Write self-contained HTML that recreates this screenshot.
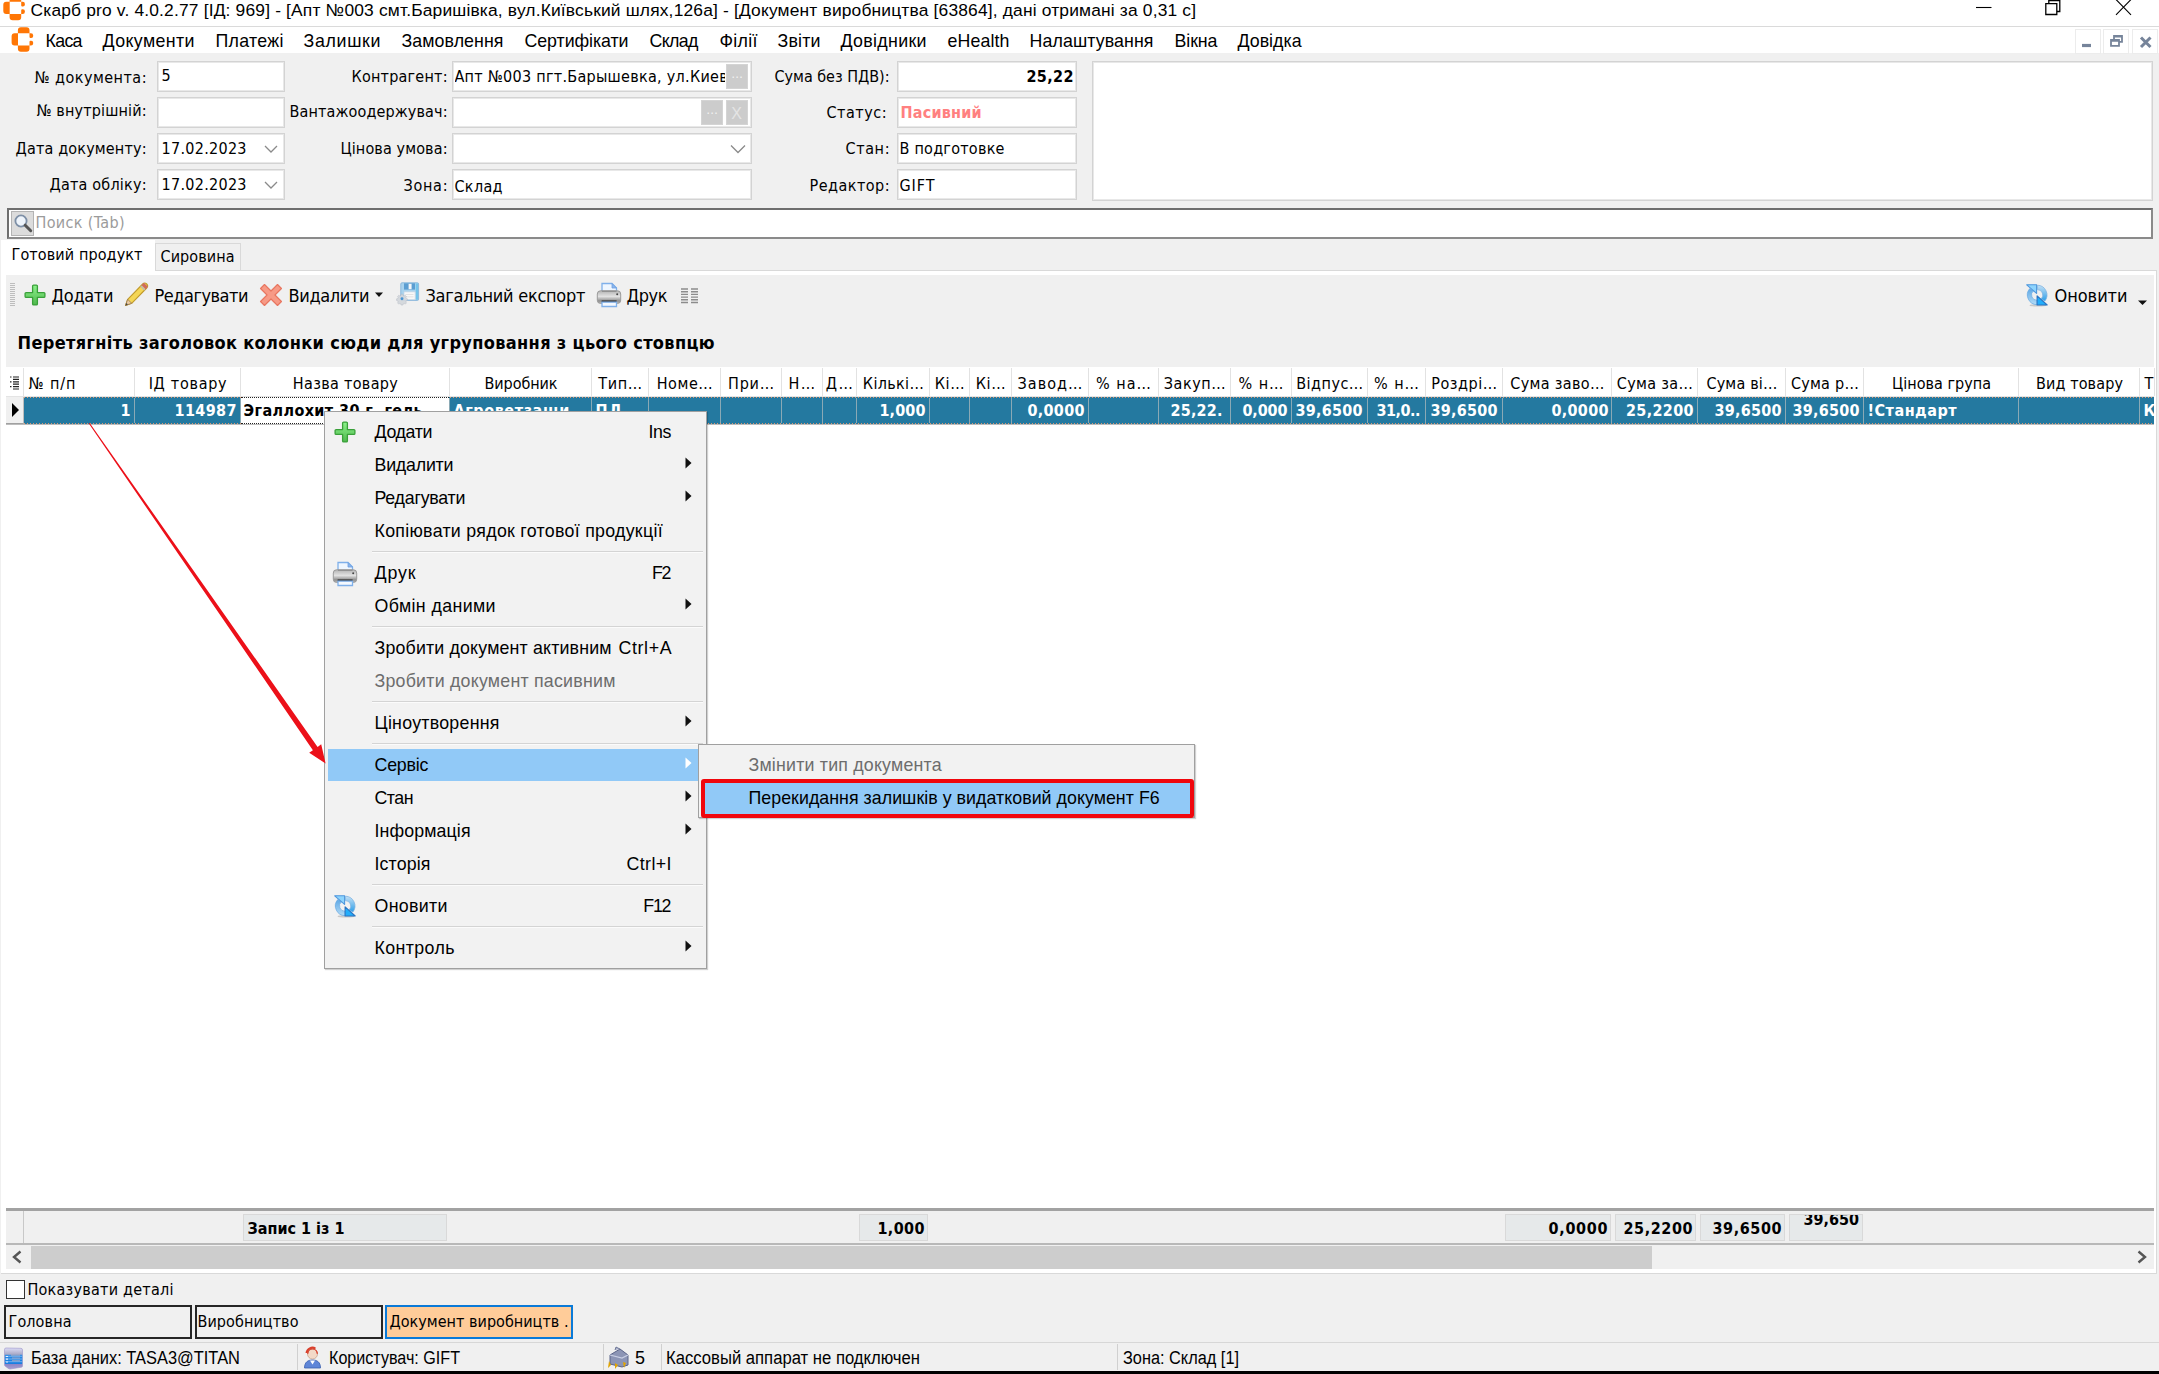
<!DOCTYPE html>
<html lang="uk">
<head>
<meta charset="utf-8">
<title>Скарб pro</title>
<style>
html,body{margin:0;padding:0;background:#f0f0f0;}
body{width:2159px;height:1374px;overflow:hidden;font-family:"DejaVu Sans Condensed","DejaVu Sans","Liberation Sans",sans-serif;font-stretch:condensed;}
#app{position:relative;width:2159px;height:1374px;overflow:hidden;background:#f0f0f0;}
#app div,#app span.t,#app svg{position:absolute;box-sizing:border-box;}
.t{white-space:nowrap;display:block;}
.w{background:#fff;}
.inp{background:#fff;border:1px solid #d3d3d3;box-shadow:inset 0 0 0 1px #e8e8e8;}
.btn{background:#cccccc;border:1px solid #d4d4d4;}
.sep{background:#d7d7d7;}
</style>
</head>
<body>
<div id="app">
<svg style="left:0;top:0" width="0" height="0"><defs><linearGradient id="gPl" x1="0" y1="0" x2="0" y2="1"><stop offset="0" stop-color="#8df28b"/><stop offset="1" stop-color="#4fb84d"/></linearGradient><linearGradient id="gPr" x1="0" y1="0" x2="0" y2="1"><stop offset="0" stop-color="#b4b4b4"/><stop offset=".45" stop-color="#e2e2e2"/><stop offset=".8" stop-color="#8e8e8e"/><stop offset="1" stop-color="#bdbdbd"/></linearGradient><linearGradient id="gRa" x1="0" y1="0" x2="0" y2="1"><stop offset="0" stop-color="#c4e0f5"/><stop offset="1" stop-color="#2f9fe8"/></linearGradient><linearGradient id="gRb" x1="0" y1="0" x2="0" y2="1"><stop offset="0" stop-color="#5fa9e6"/><stop offset="1" stop-color="#b4dcf6"/></linearGradient></defs></svg>
<div class="w" style="left:0px;top:0px;width:2159px;height:53px;"></div>
<div class="" style="left:0px;top:26px;width:2159px;height:1px;background:#dadada;"></div>
<svg style="left:0;top:0" width="40" height="56" viewBox="0 0 40 56"><path transform="translate(-8.3 -31.45)" d="M17.900 33.300V30.300Q17.900 27.300 20.900 27.300H26.500Q29.500 27.300 29.500 30.300V33.300Z M18 33.300H14.600Q11.600 33.300 11.600 36.300V42.400Q11.600 45.400 14.600 45.400H18Z M17.900 45.400H29.500V48.700Q29.500 51.700 26.500 51.700H20.900Q17.900 51.700 17.900 48.700Z M29.500 33.300H31Q33.200 33.300 33.200 35.500V36Q33.200 38 31.200 38H30.500Q29.500 38 29.500 37Z M29.500 45.400H31Q33.200 45.400 33.200 43.200V42.800Q33.200 40.800 31.200 40.800H30.500Q29.500 40.800 29.500 41.800Z" fill="#ff7605"/></svg>
<span id="t1" class="t" style="top:-1px;font-size:17.4px;line-height:22px;height:22px;color:#000;font-family:'Liberation Sans',sans-serif;letter-spacing:0.17px;left:30.5px;">Скарб pro v. 4.0.2.77 [ІД: 969] - [Апт №003 смт.Баришівка, вул.Київський шлях,126а] - [Документ виробництва [63864], дані отримані за 0,31 с]</span>
<svg style="left:1960px;top:0" width="199" height="26" viewBox="0 0 199 26"><g fill="none" stroke="#000" stroke-width="1.1"><path d="M16 7.500h15.500"/><path d="M85.800 3.700h11v10.800h-11z M88.800 3.700v-3.200h11v11h-3" stroke-width="1.300"/><path d="M156 -0.500l15 15.300M171 -0.500l-15 15.300"/></g></svg>
<svg style="left:0;top:0" width="40" height="56" viewBox="0 0 40 56"><path transform="translate(0 0)" d="M17.900 33.300V30.300Q17.900 27.300 20.900 27.300H26.500Q29.500 27.300 29.500 30.300V33.300Z M18 33.300H14.600Q11.600 33.300 11.600 36.300V42.400Q11.600 45.400 14.600 45.400H18Z M17.900 45.400H29.500V48.700Q29.500 51.700 26.500 51.700H20.900Q17.900 51.700 17.900 48.700Z M29.500 33.300H31Q33.200 33.300 33.200 35.500V36Q33.200 38 31.200 38H30.500Q29.500 38 29.500 37Z M29.500 45.400H31Q33.200 45.400 33.200 43.200V42.800Q33.200 40.800 31.200 40.800H30.500Q29.500 40.800 29.500 41.800Z" fill="#ff7605"/></svg>
<span id="t2" class="t" style="top:29px;font-size:17.8px;line-height:24px;height:24px;color:#000;font-family:'Liberation Sans',sans-serif;letter-spacing:-0.68px;left:45.5px;">Каса</span>
<span id="t3" class="t" style="top:29px;font-size:17.8px;line-height:24px;height:24px;color:#000;font-family:'Liberation Sans',sans-serif;letter-spacing:0.4px;left:102.5px;">Документи</span>
<span id="t4" class="t" style="top:29px;font-size:17.8px;line-height:24px;height:24px;color:#000;font-family:'Liberation Sans',sans-serif;letter-spacing:0.31px;left:215.5px;">Платежі</span>
<span id="t5" class="t" style="top:29px;font-size:17.8px;line-height:24px;height:24px;color:#000;font-family:'Liberation Sans',sans-serif;letter-spacing:0.68px;left:303.5px;">Залишки</span>
<span id="t6" class="t" style="top:29px;font-size:17.8px;line-height:24px;height:24px;color:#000;font-family:'Liberation Sans',sans-serif;letter-spacing:0.07px;left:401.5px;">Замовлення</span>
<span id="t7" class="t" style="top:29px;font-size:17.8px;line-height:24px;height:24px;color:#000;font-family:'Liberation Sans',sans-serif;letter-spacing:-0.06px;left:524.5px;">Сертифікати</span>
<span id="t8" class="t" style="top:29px;font-size:17.8px;line-height:24px;height:24px;color:#000;font-family:'Liberation Sans',sans-serif;letter-spacing:-0.62px;left:649.5px;">Склад</span>
<span id="t9" class="t" style="top:29px;font-size:17.8px;line-height:24px;height:24px;color:#000;font-family:'Liberation Sans',sans-serif;letter-spacing:0.31px;left:719.5px;">Філії</span>
<span id="t10" class="t" style="top:29px;font-size:17.8px;line-height:24px;height:24px;color:#000;font-family:'Liberation Sans',sans-serif;letter-spacing:0.2px;left:777.5px;">Звіти</span>
<span id="t11" class="t" style="top:29px;font-size:17.8px;line-height:24px;height:24px;color:#000;font-family:'Liberation Sans',sans-serif;letter-spacing:0.33px;left:840.5px;">Довідники</span>
<span id="t12" class="t" style="top:29px;font-size:17.8px;line-height:24px;height:24px;color:#000;font-family:'Liberation Sans',sans-serif;letter-spacing:0.12px;left:947.5px;">eHealth</span>
<span id="t13" class="t" style="top:29px;font-size:17.8px;line-height:24px;height:24px;color:#000;font-family:'Liberation Sans',sans-serif;letter-spacing:0.1px;left:1029.5px;">Налаштування</span>
<span id="t14" class="t" style="top:29px;font-size:17.8px;line-height:24px;height:24px;color:#000;font-family:'Liberation Sans',sans-serif;letter-spacing:-0.08px;left:1174.5px;">Вікна</span>
<span id="t15" class="t" style="top:29px;font-size:17.8px;line-height:24px;height:24px;color:#000;font-family:'Liberation Sans',sans-serif;letter-spacing:0.01px;left:1237.5px;">Довідка</span>
<div class="" style="left:2075px;top:29px;width:26px;height:25px;background:#fff;border:1px solid #ececec;"></div>
<div class="" style="left:2103px;top:29px;width:26px;height:25px;background:#fff;border:1px solid #ececec;"></div>
<div class="" style="left:2132px;top:29px;width:26px;height:25px;background:#fff;border:1px solid #ececec;"></div>
<svg style="left:2075px;top:29px" width="84" height="25" viewBox="0 0 84 25"><g fill="none" stroke="#76849a"><path d="M7 16.500h9" stroke-width="3.200"/><path d="M66 8.500l9.500 9.500M75.500 8.500l-9.500 9.500" stroke-width="3"/><path d="M36 10.800h8v6h-8z M39 10v-3.200h8v6h-3" stroke-width="1.800"/><path d="M36 11.500h8M39 7.400h8" stroke-width="2.400"/></g></svg>
<span id="t16" class="t" style="top:68px;font-size:16px;line-height:20px;height:20px;color:#000;letter-spacing:0.48px;right:2012.02px;">№ документа:</span>
<div class="inp" style="left:157px;top:61px;width:128px;height:31px;"></div>
<span id="t17" class="t" style="top:101px;font-size:16px;line-height:20px;height:20px;color:#000;letter-spacing:0.14px;right:2012.36px;">№ внутрішній:</span>
<div class="inp" style="left:157px;top:97px;width:128px;height:31px;"></div>
<span id="t18" class="t" style="top:139px;font-size:16px;line-height:20px;height:20px;color:#000;letter-spacing:0.16px;right:2012.34px;">Дата документу:</span>
<div class="inp" style="left:157px;top:133px;width:128px;height:31px;"></div>
<span id="t19" class="t" style="top:175px;font-size:16px;line-height:20px;height:20px;color:#000;letter-spacing:0.2px;right:2012.30px;">Дата обліку:</span>
<div class="inp" style="left:157px;top:169px;width:128px;height:31px;"></div>
<span id="t20" class="t" style="top:66px;font-size:16px;line-height:20px;height:20px;color:#000;left:161.5px;">5</span>
<span id="t21" class="t" style="top:139px;font-size:16px;line-height:20px;height:20px;color:#000;letter-spacing:0.29px;left:161.5px;">17.02.2023</span>
<svg style="left:263px;top:143px" width="16" height="12" viewBox="0 0 16 12"><path d="M2 3l6 6l6-6" fill="none" stroke="#8a8a8a" stroke-width="1.3"/></svg>
<span id="t22" class="t" style="top:175px;font-size:16px;line-height:20px;height:20px;color:#000;letter-spacing:0.29px;left:161.5px;">17.02.2023</span>
<svg style="left:263px;top:179px" width="16" height="12" viewBox="0 0 16 12"><path d="M2 3l6 6l6-6" fill="none" stroke="#8a8a8a" stroke-width="1.3"/></svg>
<span id="t23" class="t" style="top:67px;font-size:16px;line-height:20px;height:20px;color:#000;letter-spacing:0.21px;right:1711.29px;">Контрагент:</span>
<div class="inp" style="left:452px;top:61px;width:300px;height:31px;"></div>
<span id="t24" class="t" style="top:102px;font-size:16px;line-height:20px;height:20px;color:#000;letter-spacing:0.12px;right:1711.38px;">Вантажоодержувач:</span>
<div class="inp" style="left:452px;top:97px;width:300px;height:31px;"></div>
<span id="t25" class="t" style="top:139px;font-size:16px;line-height:20px;height:20px;color:#000;letter-spacing:0.12px;right:1711.38px;">Цінова умова:</span>
<div class="inp" style="left:452px;top:133px;width:300px;height:31px;"></div>
<span id="t26" class="t" style="top:176px;font-size:16px;line-height:20px;height:20px;color:#000;letter-spacing:0.72px;right:1710.78px;">Зона:</span>
<div class="inp" style="left:452px;top:169px;width:300px;height:31px;"></div>
<span id="t27" class="t" style="top:67px;font-size:16px;line-height:20px;height:20px;color:#000;letter-spacing:0.28px;left:454.5px;width:270px;overflow:hidden;">Апт №003 пгт.Барышевка, ул.Киев</span>
<span id="t28" class="t" style="top:176.5px;font-size:16px;line-height:20px;height:20px;color:#000;letter-spacing:0.32px;left:454.5px;">Склад</span>
<div class="btn" style="left:726px;top:64px;width:22px;height:25px;"></div>
<span id="t29" class="t" style="top:63.5px;font-size:13px;line-height:20px;height:20px;color:#f2f2f2;left:737px;transform:translateX(-50%);">…</span>
<div class="btn" style="left:701px;top:100px;width:22px;height:25px;"></div>
<span id="t30" class="t" style="top:99.5px;font-size:13px;line-height:20px;height:20px;color:#f2f2f2;left:712px;transform:translateX(-50%);">…</span>
<div class="btn" style="left:726px;top:100px;width:22px;height:25px;"></div>
<span id="t31" class="t" style="top:104px;font-size:16px;line-height:20px;height:20px;color:#e4e4e4;font-family:'Liberation Sans',sans-serif;left:736.5px;transform:translateX(-50%);">X</span>
<svg style="left:729px;top:143px" width="18" height="12" viewBox="0 0 18 12"><path d="M2 2.5l7 7l7-7" fill="none" stroke="#8a8a8a" stroke-width="1.3"/></svg>
<span id="t32" class="t" style="top:66.5px;font-size:16px;line-height:20px;height:20px;color:#000;letter-spacing:-0.02px;right:1269.52px;">Сума без ПДВ):</span>
<div class="inp" style="left:897px;top:61px;width:180px;height:31px;"></div>
<span id="t33" class="t" style="top:102.5px;font-size:16px;line-height:20px;height:20px;color:#000;letter-spacing:0.51px;right:1271.99px;">Статус:</span>
<div class="inp" style="left:897px;top:97px;width:180px;height:31px;"></div>
<span id="t34" class="t" style="top:138.5px;font-size:16px;line-height:20px;height:20px;color:#000;letter-spacing:0.62px;right:1268.88px;">Стан:</span>
<div class="inp" style="left:897px;top:133px;width:180px;height:31px;"></div>
<span id="t35" class="t" style="top:176px;font-size:16px;line-height:20px;height:20px;color:#000;letter-spacing:0.48px;right:1269.02px;">Редактор:</span>
<div class="inp" style="left:897px;top:169px;width:180px;height:31px;"></div>
<span id="t36" class="t" style="top:66.5px;font-size:16px;line-height:20px;height:20px;color:#000;font-weight:bold;letter-spacing:0.37px;right:1085.13px;">25,22</span>
<span id="t37" class="t" style="top:102.5px;font-size:16px;line-height:20px;height:20px;color:#ff8080;font-weight:bold;letter-spacing:0.2px;left:900.5px;">Пасивний</span>
<span id="t38" class="t" style="top:138.5px;font-size:16px;line-height:20px;height:20px;color:#000;letter-spacing:0.25px;left:899.5px;">В подготовке</span>
<span id="t39" class="t" style="top:176px;font-size:16px;line-height:20px;height:20px;color:#000;letter-spacing:0.94px;left:899.5px;">GIFT</span>
<div class="inp" style="left:1092px;top:61px;width:1061px;height:140px;"></div>
<div class="w" style="left:7px;top:208px;width:2146px;height:31px;border:2px solid #6e6e6e;border-right-color:#8a8a8a;border-bottom-color:#8a8a8a;"></div>
<div class="" style="left:11px;top:211px;width:23px;height:25px;background:#dcdcdc;border:1px solid #b4b4b4;"></div>
<svg style="left:12px;top:212px" width="22" height="22" viewBox="0 0 22 22"><circle cx="9" cy="9" r="5.6" fill="#eef4fb" stroke="#7d8fa6" stroke-width="1.8"/><path d="M13.2 13.2l5.5 5.5" stroke="#555" stroke-width="3" stroke-linecap="round"/></svg>
<span id="t40" class="t" style="top:212px;font-size:16px;line-height:22px;height:22px;color:#9b9b9b;letter-spacing:0.35px;left:35.5px;">Поиск (Tab)</span>
<div class="" style="left:155px;top:243px;width:86px;height:28px;background:#f0f0f0;border:1px solid #d9d9d9;"></div>
<div class="w" style="left:1px;top:270px;width:2156px;height:1004px;border:1px solid #d9d9d9;border-left:none;border-top-color:#d9d9d9;"></div>
<div class="w" style="left:1px;top:240px;width:154px;height:36px;"></div>
<div class="" style="left:6px;top:275px;width:2148px;height:994px;background:#f0f0f0;"></div>
<span id="t41" class="t" style="top:244px;font-size:16px;line-height:22px;height:22px;color:#000;letter-spacing:0.11px;left:11.5px;">Готовий продукт</span>
<span id="t42" class="t" style="top:246px;font-size:16px;line-height:22px;height:22px;color:#000;letter-spacing:0.08px;left:160.5px;">Сировина</span>
<svg style="left:10px;top:282px" width="6" height="24" viewBox="0 0 6 24"><g stroke="#bdbdbd" stroke-width="1"><path d="M0 1.5h5"/><path d="M0 3.5h5"/><path d="M0 5.5h5"/><path d="M0 7.5h5"/><path d="M0 9.5h5"/><path d="M0 11.5h5"/><path d="M0 13.5h5"/><path d="M0 15.5h5"/><path d="M0 17.5h5"/><path d="M0 19.5h5"/><path d="M0 21.5h5"/><path d="M0 23.5h5"/></g></svg>
<span id="t43" class="t" style="top:284px;font-size:18px;line-height:24px;height:24px;color:#000;letter-spacing:-0.33px;left:51.5px;">Додати</span>
<span id="t44" class="t" style="top:284px;font-size:18px;line-height:24px;height:24px;color:#000;letter-spacing:-0.48px;left:154.5px;">Редагувати</span>
<span id="t45" class="t" style="top:284px;font-size:18px;line-height:24px;height:24px;color:#000;letter-spacing:-0.37px;left:288.5px;">Видалити</span>
<span id="t46" class="t" style="top:284px;font-size:18px;line-height:24px;height:24px;color:#000;letter-spacing:-0.27px;left:425.5px;">Загальний експорт</span>
<span id="t47" class="t" style="top:284px;font-size:18px;line-height:24px;height:24px;color:#000;letter-spacing:-0.44px;left:626.5px;">Друк</span>
<span id="t48" class="t" style="top:284px;font-size:18px;line-height:24px;height:24px;color:#000;letter-spacing:-0.04px;left:2054.5px;">Оновити</span>
<svg style="left:24px;top:284px" width="22" height="22" viewBox="0 0 22 22"><path d="M9.600 1.100h2.800a1 1 0 0 1 1 1v6.500h6.500a1 1 0 0 1 1 1v2.800a1 1 0 0 1-1 1h-6.500v6.500a1 1 0 0 1-1 1h-2.800a1 1 0 0 1-1-1v-6.500h-6.500a1 1 0 0 1-1-1v-2.800a1 1 0 0 1 1-1h6.500v-6.500a1 1 0 0 1 1-1z" fill="url(#gPl)" stroke="#3aa03a" stroke-width="1.300" stroke-linejoin="round"/></svg>
<svg style="left:123px;top:281px" width="28" height="28" viewBox="0 0 28 28"><path d="M2.500 24.500l2.200-6.200l15-15.300a2.800 2.800 0 0 1 4 4l-15 15.300z" fill="#f4d655" stroke="#c19a2b" stroke-width="1.1" stroke-linejoin="round"/><path d="M19.700 3l4 4" stroke="#d06a5c" stroke-width="3.200"/><path d="M17.800 5l4 4" stroke="#b9b9b9" stroke-width="1.500"/><path d="M2.500 24.500l2.200-6.200l4 4z" fill="#e9c9a2" stroke="#9b7b4a" stroke-width=".8"/><path d="M2.500 24.500l.9-2.500l1.600 1.600z" fill="#444"/></svg>
<svg style="left:259px;top:283px" width="24" height="24" viewBox="0 0 24 24"><g transform="rotate(45 12 12)" fill="#f79a86" stroke="#e87660" stroke-width="1.200" stroke-linejoin="round"><path d="M9.200 0h5.600v9.200h9.200v5.600h-9.200v9.200h-5.600v-9.200h-9.200v-5.600h9.200z"/></g></svg>
<svg style="left:374px;top:292px" width="10" height="6" viewBox="0 0 10 6"><path d="M1 .5h8l-4 4.500z" fill="#111"/></svg>
<svg style="left:396px;top:281px" width="24" height="26" viewBox="0 0 24 26"><rect x="4.800" y="1.800" width="17.800" height="17.600" rx="1.200" fill="#a9d3ee" stroke="#8eb9dc" stroke-width="1"/><path d="M19.800 2.500h2.300v16.200h-2.300z" fill="#74c4ea"/><path d="M8 2.300h11v6.300h-11z" fill="#5b9ed2"/><path d="M12.600 2.800h3v5.400h-3z" fill="#f4f6f8"/><path d="M8 10.800h11.200v7.800h-11.200z" fill="#f8f8f8" stroke="#c4d4e2" stroke-width=".7"/><path d="M9.500 13.500h8M9.500 15.800h8" stroke="#dcdcdc" stroke-width=".8"/><g transform="translate(6 17.700) scale(.76)" opacity=".9"><path d="M-1.100 -5.800h2.200l.4 1.500l1.400 .6l1.400-.8l1.500 1.500l-.8 1.400l.6 1.400l1.500 .4v2.200l-1.500 .4l-.6 1.400l.8 1.400l-1.500 1.500l-1.400-.8l-1.400 .6l-.4 1.500h-2.200l-.4-1.500l-1.400-.6l-1.400 .8l-1.500-1.500l.8-1.400l-.6-1.400l-1.500-.4v-2.200l1.500-.4l.6-1.400l-.8-1.400l1.500-1.500l1.400 .8l1.400-.6z" fill="#d3d7dc" stroke="#b4bac2" stroke-width=".7"/><circle r="1.900" fill="#3f8fd2"/></g></svg>
<svg style="left:596px;top:282px" width="26" height="26" viewBox="0 0 26 26"><path d="M6 1.500h10l4.500 4.500v4h-14.500z" fill="#eef6ff" stroke="#7fb0ea" stroke-width="1.300"/><path d="M16 1.500v4.500h4.500z" fill="#8bb8ee" stroke="#6f9fe0" stroke-width=".8"/><rect x="1.300" y="8.800" width="23.400" height="12.600" rx="3.200" fill="url(#gPr)" stroke="#9a9a9a" stroke-width="1"/><path d="M6 9.300h14.500" stroke="#8f8f8f" stroke-width="1.200"/><rect x="5.600" y="18.400" width="15" height="2" fill="#333"/><path d="M6 20.200h14.500v4.300h-14.500z" fill="#f4f9ff" stroke="#7fb0ea" stroke-width="1.300"/><circle cx="21.200" cy="12.200" r="1" fill="#444"/></svg>
<svg style="left:681px;top:288px" width="18" height="16" viewBox="0 0 18 16"><g stroke="#8c8c8c" stroke-width="1.400"><path d="M0 1.0h7M10 1.0h7"/><path d="M0 3.7h7M10 3.7h7"/><path d="M0 6.4h7M10 6.4h7"/><path d="M0 9.1h7M10 9.1h7"/><path d="M0 11.8h7M10 11.8h7"/><path d="M0 14.5h7M10 14.5h7"/></g></svg>
<svg style="left:2025px;top:283px" width="24" height="24" viewBox="0 0 24 24"><ellipse cx="13" cy="22.400" rx="8.500" ry="1.100" fill="#c9c9c9"/><path d="M12.200 21.700A9.800 9.800 0 0 1 4.600 5.700L8.400 7.800A5.400 5.400 0 0 0 12.200 17.300z" fill="url(#gRb)" stroke="#62a6e2" stroke-width=".7"/><path d="M1.700 1.800H11.600V10.400z" fill="#8dd4fd" stroke="#4f97dd" stroke-width="1.100" stroke-linejoin="round"/><path d="M12.400 2.200A9.800 9.800 0 0 1 19.900 18L16.100 15.900A5.400 5.400 0 0 0 12.400 6.600z" fill="url(#gRa)" stroke="#74ade0" stroke-width=".7"/><path d="M22.200 22H12.100V12.800z" fill="#22aefb" stroke="#2b74c2" stroke-width="1.100" stroke-linejoin="round"/></svg>
<svg style="left:2137px;top:300px" width="12" height="6" viewBox="0 0 12 6"><path d="M1 .5h9l-4.500 4.500z" fill="#111"/></svg>
<span id="t49" class="t" style="top:331px;font-size:18px;line-height:24px;height:24px;color:#000;font-weight:bold;letter-spacing:0.34px;left:17.5px;">Перетягніть заголовок колонки сюди для угруповання з цього стовпцю</span>
<div class="w" style="left:6px;top:367px;width:2148px;height:842px;"></div>
<div class="" style="left:6px;top:396px;width:2148px;height:1px;background:#e4e4e4;"></div>
<div class="" style="left:134px;top:368px;width:1px;height:28px;background:#e2e2e2;"></div>
<span id="t50" class="t" style="top:374px;font-size:16px;line-height:20px;height:20px;color:#000;letter-spacing:0.94px;left:28.5px;">№ п/п</span>
<div class="" style="left:240px;top:368px;width:1px;height:28px;background:#e2e2e2;"></div>
<span id="t51" class="t" style="top:374px;font-size:16px;line-height:20px;height:20px;color:#000;letter-spacing:0.72px;left:188.0px;transform:translateX(-50%);">ІД товару</span>
<div class="" style="left:449px;top:368px;width:1px;height:28px;background:#e2e2e2;"></div>
<span id="t52" class="t" style="top:374px;font-size:16px;line-height:20px;height:20px;color:#000;letter-spacing:0.33px;left:345.5px;transform:translateX(-50%);">Назва товару</span>
<div class="" style="left:591px;top:368px;width:1px;height:28px;background:#e2e2e2;"></div>
<span id="t53" class="t" style="top:374px;font-size:16px;line-height:20px;height:20px;color:#000;letter-spacing:-0.07px;left:521.0px;transform:translateX(-50%);">Виробник</span>
<div class="" style="left:648px;top:368px;width:1px;height:28px;background:#e2e2e2;"></div>
<span id="t54" class="t" style="top:374px;font-size:16px;line-height:20px;height:20px;color:#000;letter-spacing:0.68px;left:620.5px;transform:translateX(-50%);">Тип…</span>
<div class="" style="left:720px;top:368px;width:1px;height:28px;background:#e2e2e2;"></div>
<span id="t55" class="t" style="top:374px;font-size:16px;line-height:20px;height:20px;color:#000;letter-spacing:0.56px;left:685.0px;transform:translateX(-50%);">Номе…</span>
<div class="" style="left:781px;top:368px;width:1px;height:28px;background:#e2e2e2;"></div>
<span id="t56" class="t" style="top:374px;font-size:16px;line-height:20px;height:20px;color:#000;letter-spacing:0.76px;left:751.5px;transform:translateX(-50%);">При…</span>
<div class="" style="left:822px;top:368px;width:1px;height:28px;background:#e2e2e2;"></div>
<span id="t57" class="t" style="top:374px;font-size:16px;line-height:20px;height:20px;color:#000;letter-spacing:1.5px;left:802.5px;transform:translateX(-50%);">Н…</span>
<div class="" style="left:856px;top:368px;width:1px;height:28px;background:#e2e2e2;"></div>
<span id="t58" class="t" style="top:374px;font-size:16px;line-height:20px;height:20px;color:#000;letter-spacing:1.34px;left:840.0px;transform:translateX(-50%);">Д…</span>
<div class="" style="left:929px;top:368px;width:1px;height:28px;background:#e2e2e2;"></div>
<span id="t59" class="t" style="top:374px;font-size:16px;line-height:20px;height:20px;color:#000;letter-spacing:0.33px;left:893.5px;transform:translateX(-50%);">Кількі…</span>
<div class="" style="left:969px;top:368px;width:1px;height:28px;background:#e2e2e2;"></div>
<span id="t60" class="t" style="top:374px;font-size:16px;line-height:20px;height:20px;color:#000;letter-spacing:0.69px;left:950.0px;transform:translateX(-50%);">Кі…</span>
<div class="" style="left:1011px;top:368px;width:1px;height:28px;background:#e2e2e2;"></div>
<span id="t61" class="t" style="top:374px;font-size:16px;line-height:20px;height:20px;color:#000;letter-spacing:0.69px;left:991.0px;transform:translateX(-50%);">Кі…</span>
<div class="" style="left:1088px;top:368px;width:1px;height:28px;background:#e2e2e2;"></div>
<span id="t62" class="t" style="top:374px;font-size:16px;line-height:20px;height:20px;color:#000;letter-spacing:1.06px;left:1050.5px;transform:translateX(-50%);">Завод…</span>
<div class="" style="left:1158px;top:368px;width:1px;height:28px;background:#e2e2e2;"></div>
<span id="t63" class="t" style="top:374px;font-size:16px;line-height:20px;height:20px;color:#000;letter-spacing:1.03px;left:1124.0px;transform:translateX(-50%);">% на…</span>
<div class="" style="left:1230px;top:368px;width:1px;height:28px;background:#e2e2e2;"></div>
<span id="t64" class="t" style="top:374px;font-size:16px;line-height:20px;height:20px;color:#000;letter-spacing:0.58px;left:1195.0px;transform:translateX(-50%);">Закуп…</span>
<div class="" style="left:1291px;top:368px;width:1px;height:28px;background:#e2e2e2;"></div>
<span id="t65" class="t" style="top:374px;font-size:16px;line-height:20px;height:20px;color:#000;letter-spacing:0.98px;left:1261.5px;transform:translateX(-50%);">% н…</span>
<div class="" style="left:1367px;top:368px;width:1px;height:28px;background:#e2e2e2;"></div>
<span id="t66" class="t" style="top:374px;font-size:16px;line-height:20px;height:20px;color:#000;letter-spacing:0.49px;left:1330.0px;transform:translateX(-50%);">Відпус…</span>
<div class="" style="left:1425px;top:368px;width:1px;height:28px;background:#e2e2e2;"></div>
<span id="t67" class="t" style="top:374px;font-size:16px;line-height:20px;height:20px;color:#000;letter-spacing:0.98px;left:1397.0px;transform:translateX(-50%);">% н…</span>
<div class="" style="left:1502px;top:368px;width:1px;height:28px;background:#e2e2e2;"></div>
<span id="t68" class="t" style="top:374px;font-size:16px;line-height:20px;height:20px;color:#000;letter-spacing:0.56px;left:1464.5px;transform:translateX(-50%);">Роздрі…</span>
<div class="" style="left:1611px;top:368px;width:1px;height:28px;background:#e2e2e2;"></div>
<span id="t69" class="t" style="top:374px;font-size:16px;line-height:20px;height:20px;color:#000;letter-spacing:0.34px;left:1557.5px;transform:translateX(-50%);">Сума заво…</span>
<div class="" style="left:1697px;top:368px;width:1px;height:28px;background:#e2e2e2;"></div>
<span id="t70" class="t" style="top:374px;font-size:16px;line-height:20px;height:20px;color:#000;letter-spacing:0.33px;left:1655.0px;transform:translateX(-50%);">Сума за…</span>
<div class="" style="left:1785px;top:368px;width:1px;height:28px;background:#e2e2e2;"></div>
<span id="t71" class="t" style="top:374px;font-size:16px;line-height:20px;height:20px;color:#000;letter-spacing:0.19px;left:1742.0px;transform:translateX(-50%);">Сума ві…</span>
<div class="" style="left:1863px;top:368px;width:1px;height:28px;background:#e2e2e2;"></div>
<span id="t72" class="t" style="top:374px;font-size:16px;line-height:20px;height:20px;color:#000;letter-spacing:0.27px;left:1825.0px;transform:translateX(-50%);">Сума р…</span>
<div class="" style="left:2018px;top:368px;width:1px;height:28px;background:#e2e2e2;"></div>
<span id="t73" class="t" style="top:374px;font-size:16px;line-height:20px;height:20px;color:#000;letter-spacing:0.02px;left:1941.5px;transform:translateX(-50%);">Цінова група</span>
<div class="" style="left:2139px;top:368px;width:1px;height:28px;background:#e2e2e2;"></div>
<span id="t74" class="t" style="top:374px;font-size:16px;line-height:20px;height:20px;color:#000;letter-spacing:0.12px;left:2079.5px;transform:translateX(-50%);">Вид товару</span>
<div class="" style="left:2154px;top:368px;width:1px;height:28px;background:#e2e2e2;"></div>
<span id="t75" class="t" style="top:374px;font-size:16px;line-height:20px;height:20px;color:#000;left:2144.5px;">Т</span>
<div class="" style="left:23px;top:368px;width:1px;height:28px;background:#e2e2e2;"></div>
<svg style="left:10px;top:376px" width="10" height="14" viewBox="0 0 10 14"><g stroke="#222" stroke-width="1.200"><path d="M3 1h6M0 1h1.500M3 3.400h6M3 5.800h6M0 5.800h1.500M3 8.200h6M3 10.600h6M0 10.600h1.500M3 13h6"/></g></svg>
<div class="" style="left:6px;top:397px;width:18px;height:27px;background:#f0f0f0;border-right:1px solid #bdbdbd;border-bottom:1px solid #a0a0a0;"></div>
<svg style="left:11px;top:402px" width="9" height="16" viewBox="0 0 9 16"><path d="M1 1l7 7l-7 7z" fill="#000"/></svg>
<div class="" style="left:24px;top:397px;width:2130px;height:27px;background:#2479a0;"></div>
<div class="" style="left:24px;top:397px;width:2130px;height:1px;background:repeating-linear-gradient(90deg,#e39a70 0 1px,transparent 1px 3px);"></div>
<div class="" style="left:24px;top:423px;width:2130px;height:1px;background:repeating-linear-gradient(90deg,#d99872 0 1px,transparent 1px 3px);"></div>
<div class="" style="left:6px;top:424px;width:2148px;height:1px;background:#bcbcbc;"></div>
<div class="" style="left:134px;top:398px;width:1px;height:25px;background:#8aa9b5;"></div>
<div class="" style="left:240px;top:398px;width:1px;height:25px;background:#8aa9b5;"></div>
<div class="" style="left:449px;top:398px;width:1px;height:25px;background:#8aa9b5;"></div>
<div class="" style="left:591px;top:398px;width:1px;height:25px;background:#8aa9b5;"></div>
<div class="" style="left:648px;top:398px;width:1px;height:25px;background:#8aa9b5;"></div>
<div class="" style="left:720px;top:398px;width:1px;height:25px;background:#8aa9b5;"></div>
<div class="" style="left:781px;top:398px;width:1px;height:25px;background:#8aa9b5;"></div>
<div class="" style="left:822px;top:398px;width:1px;height:25px;background:#8aa9b5;"></div>
<div class="" style="left:856px;top:398px;width:1px;height:25px;background:#8aa9b5;"></div>
<div class="" style="left:929px;top:398px;width:1px;height:25px;background:#8aa9b5;"></div>
<div class="" style="left:969px;top:398px;width:1px;height:25px;background:#8aa9b5;"></div>
<div class="" style="left:1011px;top:398px;width:1px;height:25px;background:#8aa9b5;"></div>
<div class="" style="left:1088px;top:398px;width:1px;height:25px;background:#8aa9b5;"></div>
<div class="" style="left:1158px;top:398px;width:1px;height:25px;background:#8aa9b5;"></div>
<div class="" style="left:1230px;top:398px;width:1px;height:25px;background:#8aa9b5;"></div>
<div class="" style="left:1291px;top:398px;width:1px;height:25px;background:#8aa9b5;"></div>
<div class="" style="left:1367px;top:398px;width:1px;height:25px;background:#8aa9b5;"></div>
<div class="" style="left:1425px;top:398px;width:1px;height:25px;background:#8aa9b5;"></div>
<div class="" style="left:1502px;top:398px;width:1px;height:25px;background:#8aa9b5;"></div>
<div class="" style="left:1611px;top:398px;width:1px;height:25px;background:#8aa9b5;"></div>
<div class="" style="left:1697px;top:398px;width:1px;height:25px;background:#8aa9b5;"></div>
<div class="" style="left:1785px;top:398px;width:1px;height:25px;background:#8aa9b5;"></div>
<div class="" style="left:1863px;top:398px;width:1px;height:25px;background:#8aa9b5;"></div>
<div class="" style="left:2018px;top:398px;width:1px;height:25px;background:#8aa9b5;"></div>
<div class="" style="left:2139px;top:398px;width:1px;height:25px;background:#8aa9b5;"></div>
<div class="w" style="left:241px;top:397px;width:208px;height:27px;border:1px dotted #222;border-left:none;border-right:none;"></div>
<span id="t76" class="t" style="top:400px;font-size:16px;line-height:22px;height:22px;color:#fff;font-weight:bold;letter-spacing:-0.02px;right:2028.52px;">1</span>
<span id="t77" class="t" style="top:400px;font-size:16px;line-height:22px;height:22px;color:#fff;font-weight:bold;letter-spacing:0.38px;right:1922.12px;">114987</span>
<span id="t78" class="t" style="top:400px;font-size:16px;line-height:22px;height:22px;color:#fff;font-weight:bold;letter-spacing:0.29px;right:1074.21px;">0,0000</span>
<span id="t79" class="t" style="top:400px;font-size:16px;line-height:22px;height:22px;color:#fff;font-weight:bold;letter-spacing:0.12px;right:1233.38px;">1,000</span>
<span id="t80" class="t" style="top:400px;font-size:16px;line-height:22px;height:22px;color:#fff;font-weight:bold;letter-spacing:0.2px;right:936.30px;">25,22.</span>
<span id="t81" class="t" style="top:400px;font-size:16px;line-height:22px;height:22px;color:#fff;font-weight:bold;letter-spacing:-0.13px;right:871.63px;">0,000</span>
<span id="t82" class="t" style="top:400px;font-size:16px;line-height:22px;height:22px;color:#fff;font-weight:bold;letter-spacing:0.24px;right:796.26px;">39,6500</span>
<span id="t83" class="t" style="top:400px;font-size:16px;line-height:22px;height:22px;color:#fff;font-weight:bold;letter-spacing:-0.49px;right:738.99px;">31,0..</span>
<span id="t84" class="t" style="top:400px;font-size:16px;line-height:22px;height:22px;color:#fff;font-weight:bold;letter-spacing:0.24px;right:661.26px;">39,6500</span>
<span id="t85" class="t" style="top:400px;font-size:16px;line-height:22px;height:22px;color:#fff;font-weight:bold;letter-spacing:0.29px;right:550.21px;">0,0000</span>
<span id="t86" class="t" style="top:400px;font-size:16px;line-height:22px;height:22px;color:#fff;font-weight:bold;letter-spacing:0.32px;right:465.18px;">25,2200</span>
<span id="t87" class="t" style="top:400px;font-size:16px;line-height:22px;height:22px;color:#fff;font-weight:bold;letter-spacing:0.24px;right:377.26px;">39,6500</span>
<span id="t88" class="t" style="top:400px;font-size:16px;line-height:22px;height:22px;color:#fff;font-weight:bold;letter-spacing:0.24px;right:299.26px;">39,6500</span>
<span id="t89" class="t" style="top:400px;font-size:16px;line-height:22px;height:22px;color:#fff;font-weight:bold;letter-spacing:0.49px;left:1867.5px;">!Стандарт</span>
<span id="t90" class="t" style="top:400px;font-size:16px;line-height:22px;height:22px;color:#fff;font-weight:bold;left:2143.5px;">К</span>
<span id="t91" class="t" style="top:400px;font-size:16px;line-height:22px;height:22px;color:#fff;font-weight:bold;letter-spacing:0.58px;left:453.5px;">Агроветзащи</span>
<span id="t92" class="t" style="top:400px;font-size:16px;line-height:22px;height:22px;color:#fff;font-weight:bold;letter-spacing:1.5px;left:595.5px;">ПЛ</span>
<span id="t93" class="t" style="top:400px;font-size:16px;line-height:22px;height:22px;color:#000;font-weight:bold;letter-spacing:0.4px;left:243.5px;">Эгаллохит 30 г. гель</span>
<div class="" style="left:6px;top:1211px;width:2148px;height:34px;background:#f0f0f0;border-bottom:2px solid #b8b8b8;"></div>
<div class="" style="left:6px;top:1208px;width:2148px;height:3px;background:#a2a2a2;"></div>
<div class="" style="left:23px;top:1211px;width:1px;height:32px;background:#c8c8c8;"></div>
<div class="" style="left:243px;top:1214px;width:204px;height:27px;background:#e6e9ea;border:1px solid #d9d9d9;"></div>
<span id="t94" class="t" style="top:1218px;font-size:16px;line-height:22px;height:22px;color:#000;font-weight:bold;letter-spacing:0.01px;left:247.5px;">Запис 1 із 1</span>
<div class="" style="left:859px;top:1214px;width:69px;height:27px;background:#e6e9ea;border:1px solid #d9d9d9;"></div>
<span id="t95" class="t" style="top:1218px;font-size:16px;line-height:22px;height:22px;color:#000;font-weight:bold;letter-spacing:0.37px;right:1234.13px;">1,000</span>
<div class="" style="left:1505px;top:1214px;width:106px;height:27px;background:#e6e9ea;border:1px solid #d9d9d9;"></div>
<span id="t96" class="t" style="top:1218px;font-size:16px;line-height:22px;height:22px;color:#000;font-weight:bold;letter-spacing:0.69px;right:550.81px;">0,0000</span>
<div class="" style="left:1615px;top:1214px;width:81px;height:27px;background:#e6e9ea;border:1px solid #d9d9d9;"></div>
<span id="t97" class="t" style="top:1218px;font-size:16px;line-height:22px;height:22px;color:#000;font-weight:bold;letter-spacing:0.57px;right:465.93px;">25,2200</span>
<div class="" style="left:1700px;top:1214px;width:85px;height:27px;background:#e6e9ea;border:1px solid #d9d9d9;"></div>
<span id="t98" class="t" style="top:1218px;font-size:16px;line-height:22px;height:22px;color:#000;font-weight:bold;letter-spacing:0.57px;right:376.93px;">39,6500</span>
<div class="" style="left:1789px;top:1214px;width:74px;height:27px;background:#e6e9ea;border:1px solid #d9d9d9;overflow:hidden;"><span class="t" style="position:absolute;right:3px;top:-6px;font-size:16px;line-height:22px;font-weight:bold;">39,650</span></div>
<div class="" style="left:6px;top:1246px;width:2148px;height:23px;background:#f0f0f0;"></div>
<div class="" style="left:31px;top:1246px;width:1621px;height:23px;background:#cdcdcd;"></div>
<svg style="left:11px;top:1250px" width="12" height="14" viewBox="0 0 12 14"><path d="M9.500 1.500l-6.500 5.500l6.500 5.500" fill="none" stroke="#555" stroke-width="2.400"/></svg>
<svg style="left:2136px;top:1250px" width="12" height="14" viewBox="0 0 12 14"><path d="M2.500 1.500l6.500 5.500l-6.500 5.500" fill="none" stroke="#555" stroke-width="2.400"/></svg>
<div class="w" style="left:6px;top:1280px;width:19px;height:19px;border:1.500px solid #333;"></div>
<span id="t99" class="t" style="top:1279px;font-size:16px;line-height:22px;height:22px;color:#000;letter-spacing:0.24px;left:27.5px;">Показувати деталі</span>
<div class="" style="left:4px;top:1305px;width:188px;height:34px;background:#f0f0f0;border:2px solid #262626;"></div>
<div class="" style="left:195px;top:1305px;width:188px;height:34px;background:#f0f0f0;border:2px solid #262626;"></div>
<div class="" style="left:385px;top:1305px;width:188px;height:34px;background:#ffcc99;border:2px solid #0a7ad8;"></div>
<span id="t100" class="t" style="top:1311px;font-size:16px;line-height:22px;height:22px;color:#000;letter-spacing:0.11px;left:8.5px;">Головна</span>
<span id="t101" class="t" style="top:1311px;font-size:16px;line-height:22px;height:22px;color:#000;letter-spacing:0.07px;left:197.5px;">Виробництво</span>
<span id="t102" class="t" style="top:1311px;font-size:16px;line-height:22px;height:22px;color:#000;letter-spacing:0.02px;left:389.5px;">Документ виробництв .</span>
<div class="" style="left:0px;top:1342px;width:2159px;height:1px;background:#d7d7d7;"></div>
<div class="" style="left:297px;top:1344px;width:1px;height:26px;background:#d0d0d0;"></div>
<div class="" style="left:603px;top:1344px;width:1px;height:26px;background:#d0d0d0;"></div>
<div class="" style="left:661px;top:1344px;width:1px;height:26px;background:#d0d0d0;"></div>
<div class="" style="left:1117px;top:1344px;width:1px;height:26px;background:#d0d0d0;"></div>
<span id="t103" class="t" style="top:1347px;font-size:18px;line-height:22px;height:22px;color:#000;font-family:'Liberation Sans',sans-serif;left:30.5px;transform:scaleX(0.9125);transform-origin:0 0;">База даних: TASA3@TITAN</span>
<span id="t104" class="t" style="top:1347px;font-size:18px;line-height:22px;height:22px;color:#000;font-family:'Liberation Sans',sans-serif;left:328.5px;transform:scaleX(0.8951);transform-origin:0 0;">Користувач: GIFT</span>
<span id="t105" class="t" style="top:1347px;font-size:18px;line-height:22px;height:22px;color:#000;font-family:'Liberation Sans',sans-serif;left:634.5px;transform:scaleX(0.9984);transform-origin:0 0;">5</span>
<span id="t106" class="t" style="top:1347px;font-size:18px;line-height:22px;height:22px;color:#000;font-family:'Liberation Sans',sans-serif;left:665.5px;transform:scaleX(0.9254);transform-origin:0 0;">Кассовый аппарат не подключен</span>
<span id="t107" class="t" style="top:1347px;font-size:18px;line-height:22px;height:22px;color:#000;font-family:'Liberation Sans',sans-serif;left:1122.5px;transform:scaleX(0.9066);transform-origin:0 0;">Зона: Склад [1]</span>
<div class="" style="left:0px;top:1371px;width:2159px;height:3px;background:#000;"></div>
<svg style="left:3px;top:1346px" width="24" height="24" viewBox="0 0 24 24"><defs><linearGradient id="gDb" x1="0" y1="0" x2="0" y2="1"><stop offset="0" stop-color="#dcdcf6"/><stop offset=".3" stop-color="#a9a9c6"/><stop offset=".34" stop-color="#2a8ae4"/><stop offset=".74" stop-color="#1a7fe0"/><stop offset=".78" stop-color="#8d86c6"/><stop offset="1" stop-color="#a79fd2"/></linearGradient></defs><path d="M1.500 3.500Q1.500 2 3 2L18 2.300Q19.500 2.500 19.500 4V20Q19.500 21 18.500 21.200L7 23Q6 23 5 22.200L2 20Q1.500 19.600 1.500 19z" fill="url(#gDb)" stroke="#9a94c8" stroke-width=".6"/><path d="M2 10.300h17.500M2 13h17.500M2 15.700h17.500" stroke="#7fb6ee" stroke-width=".9"/><path d="M8 9.200h9M9 12h8M9 14.700h8" stroke="#e8b8b0" stroke-width=".6"/><path d="M3 10.500h2M3 13.200h2M3 16h2" stroke="#e8f0ff" stroke-width="1.200"/></svg>
<svg style="left:302px;top:1346px" width="20" height="24" viewBox="0 0 20 24"><circle cx="10.500" cy="8" r="5" fill="#f3d9c7" stroke="#c9a58d" stroke-width=".8"/><path d="M5 8a5.500 5.500 0 0 1 11 0l-1.500-.5a4 4 0 0 0-8 0z" fill="#d9402c"/><path d="M4.500 7a6 6 0 0 1 9-4.500" stroke="#d9402c" stroke-width="2" fill="none"/><path d="M2.500 22c0-6 3.500-8 8-8s8 2 8 8z" fill="#5f86d8" stroke="#3b5fae" stroke-width=".8"/><path d="M8 14.500l2.500 4l2.500-4z" fill="#fff"/></svg>
<svg style="left:606px;top:1346px" width="24" height="24" viewBox="0 0 24 24"><path d="M4 9l10-6l8 6v10l-6 2l-12-3z" fill="#8c95b5" stroke="#5b6488" stroke-width="1"/><path d="M4 9l12 3l6-3" fill="none" stroke="#c9cfe4" stroke-width="1.200"/><path d="M3 15l-1 7l3-3zM9 17l0 6l3-4zM17 16l1 6l2-5z" fill="#e0a400"/><path d="M14 3l-4-2l-1 3" fill="#a9b0cc" stroke="#5b6488" stroke-width=".8"/></svg>
<svg style="left:0;top:0;z-index:5" width="400" height="800" viewBox="0 0 400 800"><path d="M88.800 423.600L89.700 423L317.600 747L321.200 744.300L325.600 763.600L309.200 752.800L312.900 750.200Z" fill="#ec1019"/></svg>
<div class="" style="left:324px;top:411px;width:383px;height:558px;background:#f2f2f2;border:1px solid #a0a0a0;box-shadow:1px 1px 1px rgba(0,0,0,.18);"></div>
<div class="" style="left:328px;top:749px;width:370px;height:32px;background:#91c9f7;"></div>
<span id="t108" class="t" style="top:420px;font-size:17.8px;line-height:24px;height:24px;color:#000;font-family:'Liberation Sans',sans-serif;letter-spacing:-0.34px;left:374.5px;">Додати</span>
<span id="t109" class="t" style="top:420px;font-size:17.8px;line-height:24px;height:24px;color:#000;font-family:'Liberation Sans',sans-serif;letter-spacing:-0.37px;right:1487.87px;">Ins</span>
<span id="t110" class="t" style="top:453px;font-size:17.8px;line-height:24px;height:24px;color:#000;font-family:'Liberation Sans',sans-serif;letter-spacing:-0.21px;left:374.5px;">Видалити</span>
<svg style="left:685px;top:457px" width="8" height="13" viewBox="0 0 8 13"><path d="M.500 .500l6 5.500l-6 5.500z" fill="#111"/></svg>
<span id="t111" class="t" style="top:486px;font-size:17.8px;line-height:24px;height:24px;color:#000;font-family:'Liberation Sans',sans-serif;letter-spacing:-0.23px;left:374.5px;">Редагувати</span>
<svg style="left:685px;top:490px" width="8" height="13" viewBox="0 0 8 13"><path d="M.500 .500l6 5.500l-6 5.500z" fill="#111"/></svg>
<span id="t112" class="t" style="top:519px;font-size:17.8px;line-height:24px;height:24px;color:#000;font-family:'Liberation Sans',sans-serif;letter-spacing:0.29px;left:374.5px;">Копіювати рядок готової продукції</span>
<div class="" style="left:372px;top:551px;width:331px;height:1px;background:#d4d4d4;"></div>
<div class="" style="left:372px;top:552px;width:331px;height:1px;background:#fbfbfb;"></div>
<span id="t113" class="t" style="top:561px;font-size:17.8px;line-height:24px;height:24px;color:#000;font-family:'Liberation Sans',sans-serif;letter-spacing:0.86px;left:374.5px;">Друк</span>
<span id="t114" class="t" style="top:561px;font-size:17.8px;line-height:24px;height:24px;color:#000;font-family:'Liberation Sans',sans-serif;letter-spacing:-1.2px;right:1488.70px;">F2</span>
<span id="t115" class="t" style="top:594px;font-size:17.8px;line-height:24px;height:24px;color:#000;font-family:'Liberation Sans',sans-serif;letter-spacing:0.39px;left:374.5px;">Обмін даними</span>
<svg style="left:685px;top:598px" width="8" height="13" viewBox="0 0 8 13"><path d="M.500 .500l6 5.500l-6 5.500z" fill="#111"/></svg>
<div class="" style="left:372px;top:626px;width:331px;height:1px;background:#d4d4d4;"></div>
<div class="" style="left:372px;top:627px;width:331px;height:1px;background:#fbfbfb;"></div>
<span id="t116" class="t" style="top:636px;font-size:17.8px;line-height:24px;height:24px;color:#000;font-family:'Liberation Sans',sans-serif;letter-spacing:0.17px;left:374.5px;">Зробити документ активним</span>
<span id="t117" class="t" style="top:636px;font-size:17.8px;line-height:24px;height:24px;color:#000;font-family:'Liberation Sans',sans-serif;letter-spacing:0.62px;right:1486.88px;">Ctrl+A</span>
<span id="t118" class="t" style="top:669px;font-size:17.8px;line-height:24px;height:24px;color:#6d6d6d;font-family:'Liberation Sans',sans-serif;letter-spacing:0.23px;left:374.5px;">Зробити документ пасивним</span>
<div class="" style="left:372px;top:701px;width:331px;height:1px;background:#d4d4d4;"></div>
<div class="" style="left:372px;top:702px;width:331px;height:1px;background:#fbfbfb;"></div>
<span id="t119" class="t" style="top:711px;font-size:17.8px;line-height:24px;height:24px;color:#000;font-family:'Liberation Sans',sans-serif;letter-spacing:0.26px;left:374.5px;">Ціноутворення</span>
<svg style="left:685px;top:715px" width="8" height="13" viewBox="0 0 8 13"><path d="M.500 .500l6 5.500l-6 5.500z" fill="#111"/></svg>
<div class="" style="left:372px;top:743px;width:331px;height:1px;background:#d4d4d4;"></div>
<div class="" style="left:372px;top:744px;width:331px;height:1px;background:#fbfbfb;"></div>
<span id="t120" class="t" style="top:753px;font-size:17.8px;line-height:24px;height:24px;color:#000;font-family:'Liberation Sans',sans-serif;letter-spacing:-0.18px;left:374.5px;">Сервіс</span>
<svg style="left:685px;top:757px" width="8" height="13" viewBox="0 0 8 13"><path d="M.500 .500l6 5.500l-6 5.500z" fill="#fff"/></svg>
<span id="t121" class="t" style="top:786px;font-size:17.8px;line-height:24px;height:24px;color:#000;font-family:'Liberation Sans',sans-serif;letter-spacing:-0.5px;left:374.5px;">Стан</span>
<svg style="left:685px;top:790px" width="8" height="13" viewBox="0 0 8 13"><path d="M.500 .500l6 5.500l-6 5.500z" fill="#111"/></svg>
<span id="t122" class="t" style="top:819px;font-size:17.8px;line-height:24px;height:24px;color:#000;font-family:'Liberation Sans',sans-serif;letter-spacing:0.11px;left:374.5px;">Інформація</span>
<svg style="left:685px;top:823px" width="8" height="13" viewBox="0 0 8 13"><path d="M.500 .500l6 5.500l-6 5.500z" fill="#111"/></svg>
<span id="t123" class="t" style="top:852px;font-size:17.8px;line-height:24px;height:24px;color:#000;font-family:'Liberation Sans',sans-serif;letter-spacing:0.14px;left:374.5px;">Історія</span>
<span id="t124" class="t" style="top:852px;font-size:17.8px;line-height:24px;height:24px;color:#000;font-family:'Liberation Sans',sans-serif;letter-spacing:0.4px;right:1487.10px;">Ctrl+I</span>
<div class="" style="left:372px;top:884px;width:331px;height:1px;background:#d4d4d4;"></div>
<div class="" style="left:372px;top:885px;width:331px;height:1px;background:#fbfbfb;"></div>
<span id="t125" class="t" style="top:894px;font-size:17.8px;line-height:24px;height:24px;color:#000;font-family:'Liberation Sans',sans-serif;letter-spacing:0.33px;left:374.5px;">Оновити</span>
<span id="t126" class="t" style="top:894px;font-size:17.8px;line-height:24px;height:24px;color:#000;font-family:'Liberation Sans',sans-serif;letter-spacing:-1.2px;right:1488.70px;">F12</span>
<div class="" style="left:372px;top:926px;width:331px;height:1px;background:#d4d4d4;"></div>
<div class="" style="left:372px;top:927px;width:331px;height:1px;background:#fbfbfb;"></div>
<span id="t127" class="t" style="top:936px;font-size:17.8px;line-height:24px;height:24px;color:#000;font-family:'Liberation Sans',sans-serif;letter-spacing:0.39px;left:374.5px;">Контроль</span>
<svg style="left:685px;top:940px" width="8" height="13" viewBox="0 0 8 13"><path d="M.500 .500l6 5.500l-6 5.500z" fill="#111"/></svg>
<svg style="left:334px;top:421px" width="22" height="22" viewBox="0 0 22 22"><path d="M9.600 1.100h2.800a1 1 0 0 1 1 1v6.500h6.500a1 1 0 0 1 1 1v2.800a1 1 0 0 1-1 1h-6.500v6.500a1 1 0 0 1-1 1h-2.800a1 1 0 0 1-1-1v-6.500h-6.500a1 1 0 0 1-1-1v-2.800a1 1 0 0 1 1-1h6.500v-6.500a1 1 0 0 1 1-1z" fill="url(#gPl)" stroke="#3aa03a" stroke-width="1.300" stroke-linejoin="round"/></svg>
<svg style="left:332px;top:561px" width="26" height="26" viewBox="0 0 26 26"><path d="M6 1.500h10l4.500 4.500v4h-14.500z" fill="#eef6ff" stroke="#7fb0ea" stroke-width="1.300"/><path d="M16 1.500v4.500h4.500z" fill="#8bb8ee" stroke="#6f9fe0" stroke-width=".8"/><rect x="1.300" y="8.800" width="23.400" height="12.600" rx="3.200" fill="url(#gPr)" stroke="#9a9a9a" stroke-width="1"/><path d="M6 9.300h14.500" stroke="#8f8f8f" stroke-width="1.200"/><rect x="5.600" y="18.400" width="15" height="2" fill="#333"/><path d="M6 20.200h14.500v4.300h-14.500z" fill="#f4f9ff" stroke="#7fb0ea" stroke-width="1.300"/><circle cx="21.200" cy="12.200" r="1" fill="#444"/></svg>
<svg style="left:333px;top:894px" width="24" height="24" viewBox="0 0 24 24"><ellipse cx="13" cy="22.400" rx="8.500" ry="1.100" fill="#c9c9c9"/><path d="M12.200 21.700A9.800 9.800 0 0 1 4.600 5.700L8.400 7.800A5.400 5.400 0 0 0 12.200 17.300z" fill="url(#gRb)" stroke="#62a6e2" stroke-width=".7"/><path d="M1.700 1.800H11.600V10.400z" fill="#8dd4fd" stroke="#4f97dd" stroke-width="1.100" stroke-linejoin="round"/><path d="M12.400 2.200A9.800 9.800 0 0 1 19.900 18L16.100 15.900A5.400 5.400 0 0 0 12.400 6.600z" fill="url(#gRa)" stroke="#74ade0" stroke-width=".7"/><path d="M22.200 22H12.100V12.800z" fill="#22aefb" stroke="#2b74c2" stroke-width="1.100" stroke-linejoin="round"/></svg>
<div class="" style="left:698px;top:744px;width:497px;height:74px;background:#f2f2f2;border:1px solid #a0a0a0;box-shadow:1px 1px 1px rgba(0,0,0,.18);"></div>
<div class="" style="left:702px;top:781px;width:1192px;height:33px;background:#91c9f7;width:490px;"></div>
<span id="t128" class="t" style="top:753px;font-size:17.8px;line-height:24px;height:24px;color:#6d6d6d;font-family:'Liberation Sans',sans-serif;letter-spacing:0.2px;left:748.5px;">Змінити тип документа</span>
<span id="t129" class="t" style="top:786px;font-size:17.8px;line-height:24px;height:24px;color:#000;font-family:'Liberation Sans',sans-serif;letter-spacing:0.04px;left:748.5px;">Перекидання залишків у видатковий документ F6</span>
<div class="" style="left:701px;top:779px;width:493px;height:39px;border:4px solid #f0060c;border-radius:3px;"></div>
</div>
</body>
</html>
